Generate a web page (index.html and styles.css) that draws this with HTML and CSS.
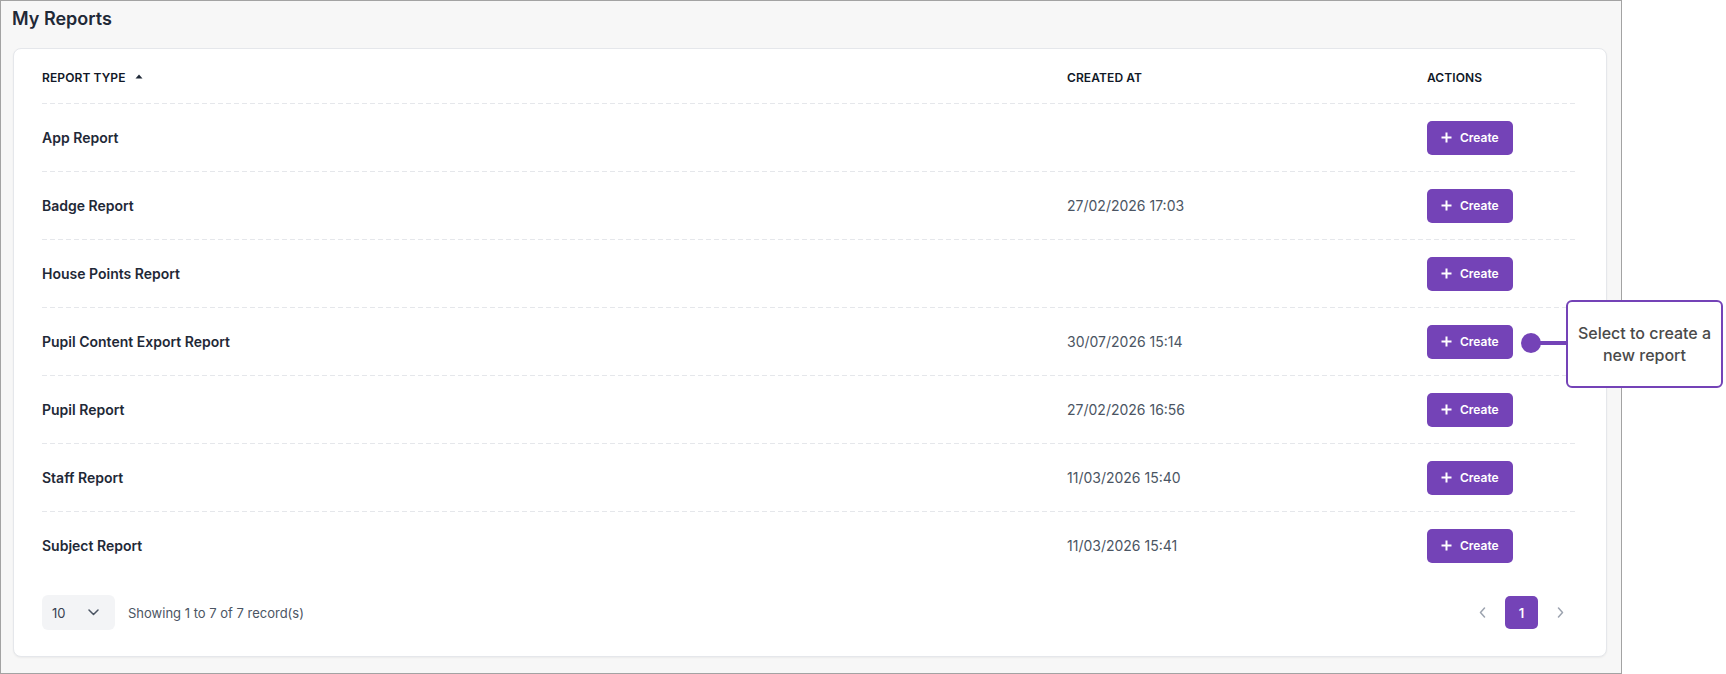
FILE: index.html
```html
<!DOCTYPE html>
<html lang="en">
<head>
<meta charset="utf-8">
<title>My Reports</title>
<link rel="stylesheet" href="styles.css">
</head>
<body>
<div class="page">
  <section class="panel">
    <h1 class="panel-title">My Reports</h1>
    <div class="card">
      <div class="grid">
        <div class="row head">
          <div class="th sortable">REPORT TYPE
            <svg class="caret" width="8" height="5" viewBox="0 0 8 5"><polygon points="0.5,4.5 4,0.6 7.5,4.5"/></svg>
          </div>
          <div class="th">CREATED AT</div>
          <div class="th">ACTIONS</div>
        </div>

        <div class="row">
          <div class="name">App Report</div>
          <div class="date"></div>
          <div><button class="btn-create"><svg class="plus" width="11" height="11" viewBox="0 0 11 11"><path d="M5.5 0.5v10M0.5 5.5h10"/></svg>Create</button></div>
        </div>
        <div class="row">
          <div class="name">Badge Report</div>
          <div class="date">27/02/2026 17:03</div>
          <div><button class="btn-create"><svg class="plus" width="11" height="11" viewBox="0 0 11 11"><path d="M5.5 0.5v10M0.5 5.5h10"/></svg>Create</button></div>
        </div>
        <div class="row">
          <div class="name">House Points Report</div>
          <div class="date"></div>
          <div><button class="btn-create"><svg class="plus" width="11" height="11" viewBox="0 0 11 11"><path d="M5.5 0.5v10M0.5 5.5h10"/></svg>Create</button></div>
        </div>
        <div class="row">
          <div class="name">Pupil Content Export Report</div>
          <div class="date">30/07/2026 15:14</div>
          <div><button class="btn-create"><svg class="plus" width="11" height="11" viewBox="0 0 11 11"><path d="M5.5 0.5v10M0.5 5.5h10"/></svg>Create</button></div>
        </div>
        <div class="row">
          <div class="name">Pupil Report</div>
          <div class="date">27/02/2026 16:56</div>
          <div><button class="btn-create"><svg class="plus" width="11" height="11" viewBox="0 0 11 11"><path d="M5.5 0.5v10M0.5 5.5h10"/></svg>Create</button></div>
        </div>
        <div class="row">
          <div class="name">Staff Report</div>
          <div class="date">11/03/2026 15:40</div>
          <div><button class="btn-create"><svg class="plus" width="11" height="11" viewBox="0 0 11 11"><path d="M5.5 0.5v10M0.5 5.5h10"/></svg>Create</button></div>
        </div>
        <div class="row">
          <div class="name">Subject Report</div>
          <div class="date">11/03/2026 15:41</div>
          <div><button class="btn-create"><svg class="plus" width="11" height="11" viewBox="0 0 11 11"><path d="M5.5 0.5v10M0.5 5.5h10"/></svg>Create</button></div>
        </div>
      </div>

      <div class="table-footer">
        <div class="footer-left">
          <div class="page-size">
            <span>10</span>
            <svg width="11" height="7" viewBox="0 0 11 7"><polyline points="1,1 5.5,5.5 10,1"/></svg>
          </div>
          <span class="showing">Showing 1 to 7 of 7 record(s)</span>
        </div>
        <nav class="pager">
          <span class="pager-arrow"><svg width="7" height="11" viewBox="0 0 7 11"><polyline points="5.5,1 1.5,5.5 5.5,10"/></svg></span>
          <span class="pager-current">1</span>
          <span class="pager-arrow"><svg width="7" height="11" viewBox="0 0 7 11"><polyline points="1.5,1 5.5,5.5 1.5,10"/></svg></span>
        </nav>
      </div>
    </div>
  </section>

  <div class="callout-dot"></div>
  <div class="callout-line"></div>
  <div class="callout">Select to create a<br>new report</div>
</div>
</body>
</html>
```

FILE: styles.css
```css
* { box-sizing: border-box; }

html, body {
  margin: 0;
  padding: 0;
  background: #ffffff;
  font-family: "Inter", "Noto Sans", sans-serif;
  color: #1f2937;
}

.page {
  position: relative;
  width: 1726px;
  height: 674px;
}

/* outer panel */
.panel {
  width: 1622px;
  height: 674px;
  border: 1px solid #a3a3a3;
  background: #f7f7f7;
  padding: 7px 14px 0 12px;
}

.panel-title {
  margin: 0 0 18px -1px;
  font-size: 18px;
  line-height: 22px;
  font-weight: 600;
  color: #1f2937;
}

.card {
  background: #ffffff;
  border: 1px solid #e5e7eb;
  border-radius: 8px;
  box-shadow: 0 1px 2px rgba(0, 0, 0, 0.05);
  padding: 0 29px 0 28px;
}

/* report table */
.grid {
  display: flex;
  flex-direction: column;
}

.row {
  display: grid;
  grid-template-columns: 1025px 360px 1fr;
  align-items: center;
  height: 68px;
  padding-bottom: 1px;
  background-image: linear-gradient(to right, #e5e7eb 5px, transparent 5px);
  background-size: 8px 1px;
  background-repeat: repeat-x;
  background-position: left bottom;
}

.row:last-child {
  height: 67px;
  padding-bottom: 0;
  background: none;
}

.row.head {
  height: 55px;
  align-items: start;
  padding-top: 23px;
}

.th {
  font-size: 12px;
  line-height: 12px;
  font-weight: 600;
  color: #111827;
  letter-spacing: 0.1px;
}

.sortable {
  display: flex;
  align-items: center;
  gap: 9px;
}

.caret {
  fill: #1f2937;
  margin-top: -4px;
}

.name {
  font-size: 14px;
  line-height: 20px;
  font-weight: 600;
  color: #1f2937;
}

.date {
  font-size: 14px;
  line-height: 20px;
  color: #4b5563;
}

.btn-create {
  display: inline-flex;
  align-items: center;
  gap: 8px;
  height: 34px;
  padding: 0 14px 0 14px;
  border: none;
  border-radius: 5px;
  background: #7443b7;
  color: #ffffff;
  font-family: inherit;
  font-size: 12px;
  font-weight: 600;
  cursor: pointer;
}

.plus {
  stroke: #ffffff;
  stroke-width: 2;
  fill: none;
}

/* footer */
.table-footer {
  display: flex;
  justify-content: space-between;
  align-items: center;
  padding: 16px 0 26px;
}

.footer-left {
  display: flex;
  align-items: center;
  gap: 13px;
}

.page-size {
  display: flex;
  align-items: center;
  justify-content: space-between;
  width: 73px;
  height: 35px;
  padding: 0 16px 0 10px;
  background: #f3f4f6;
  border-radius: 6px;
  font-size: 13px;
  color: #374151;
}

.page-size svg {
  fill: none;
  stroke: #4b5563;
  stroke-width: 1.5;
  stroke-linecap: round;
  stroke-linejoin: round;
}

.showing {
  font-size: 13px;
  color: #4b5563;
}

.pager {
  display: flex;
  align-items: center;
  gap: 6px;
}

.pager-arrow,
.pager-current {
  display: flex;
  align-items: center;
  justify-content: center;
  width: 33px;
  height: 33px;
  border-radius: 5px;
}

.pager-arrow svg {
  fill: none;
  stroke: #9ca3af;
  stroke-width: 1.5;
  stroke-linecap: round;
  stroke-linejoin: round;
}

.pager-current {
  background: #7443b7;
  color: #ffffff;
  font-size: 13px;
  font-weight: 600;
}

/* annotation callout */
.callout-dot {
  position: absolute;
  left: 1521px;
  top: 333px;
  width: 20px;
  height: 20px;
  border-radius: 50%;
  background: #7443b7;
}

.callout-line {
  position: absolute;
  left: 1536px;
  top: 341px;
  width: 32px;
  height: 4px;
  background: #7443b7;
}

.callout {
  position: absolute;
  left: 1566px;
  top: 300px;
  width: 157px;
  height: 88px;
  border: 2px solid #7443b7;
  border-radius: 6px;
  background: #ffffff;
  display: flex;
  align-items: center;
  justify-content: center;
  text-align: center;
  padding: 0 2px;
  font-size: 16px;
  line-height: 22px;
  font-weight: 500;
  color: #4a4a4a;
  white-space: nowrap;
}
```
